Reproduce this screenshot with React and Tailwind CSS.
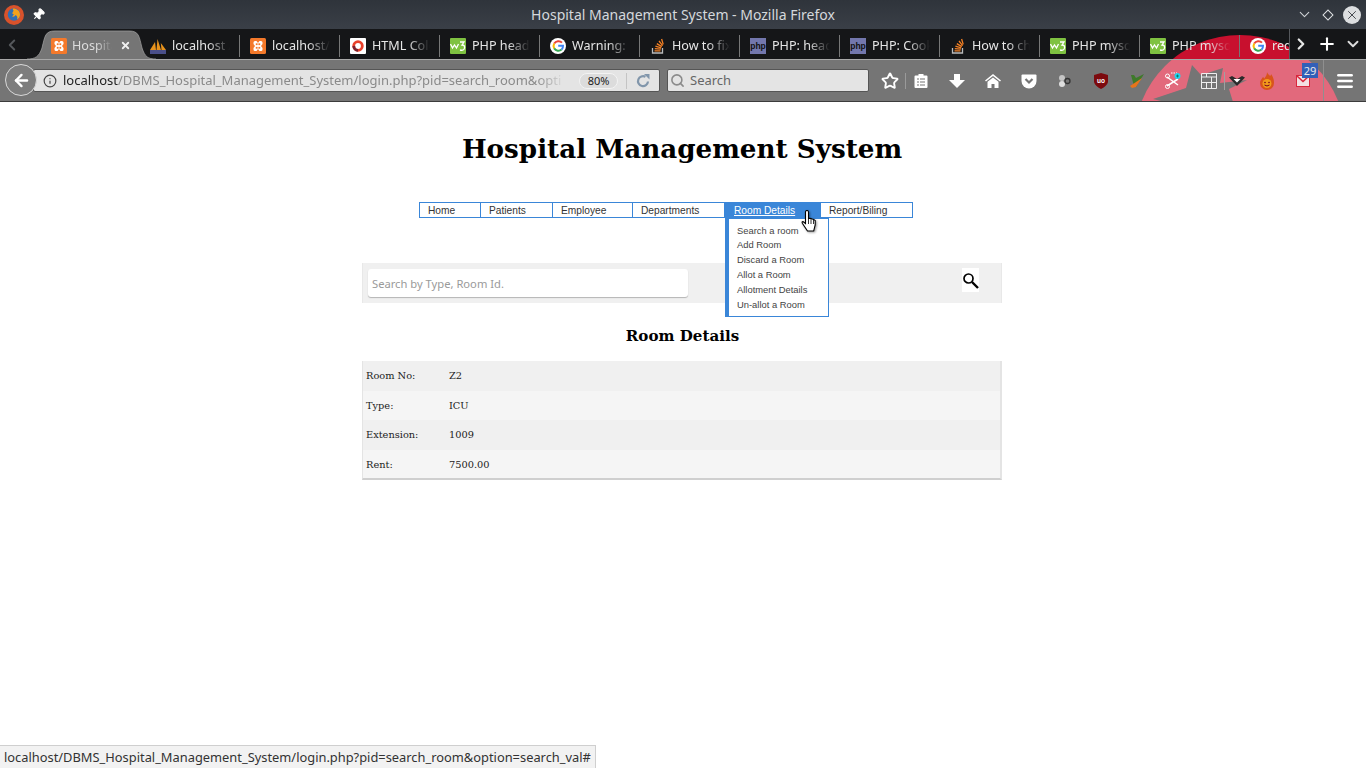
import React from "react";
import { Pin, Info, Search, Star, ChevronDown, ChevronLeft, ChevronRight, ArrowLeft, Plus, X, Menu } from "lucide-react";

const Xampp = () => (
  <svg viewBox="0 0 16 16" className="w-4 h-4 shrink-0">
    <rect width="16" height="16" rx="1.500" fill="#f4792b" />
    <path d="M3.500 4.500Q3.500 3 5 3h1.500L8 5l1.500-2H11q1.500 0 1.500 1.500V6L11 8l1.500 2v1.500Q12.500 13 11 13H9.500L8 11l-1.500 2H5q-1.500 0-1.500-1.500V10L5 8 3.500 6z" fill="#fff" />
    <rect x="5.800" y="5.300" width="1.800" height="1.800" fill="#f4792b" />
    <rect x="8.400" y="5.300" width="1.800" height="1.800" fill="#f4792b" />
    <rect x="5.800" y="8.900" width="1.800" height="1.800" fill="#f4792b" />
    <rect x="8.400" y="8.900" width="1.800" height="1.800" fill="#f4792b" />
  </svg>
);
const Pma = () => (
  <svg viewBox="0 0 16 16" className="w-4 h-4 shrink-0">
    <path d="M0 12 5 4l1 8zM6.500 12l1-11 3.500 11zM11.500 12 10.800 5 16 12z" fill="#e8931c" />
    <rect x="0" y="12" width="16" height="4" fill="#4a4f8a" />
  </svg>
);
const Ring = () => (
  <svg viewBox="0 0 16 16" className="w-4 h-4 shrink-0">
    <rect width="16" height="16" rx="1" fill="#fff" />
    <circle cx="8" cy="8" r="4.300" fill="none" stroke="#e8402a" strokeWidth="2.800" />
    <path d="M8 12.300A4.300 4.300 0 0 1 3.800 8" fill="none" stroke="#7a2230" strokeWidth="2.800" />
  </svg>
);
const W3 = () => (
  <svg viewBox="0 0 16 16" className="w-4 h-4 shrink-0">
    <rect width="16" height="16" rx="1" fill="#7fc241" />
    <path d="M.5 6l2 4 2-3 2 3 2-4M10 4h4l-2 3q3 0 2.500 3T10 12" fill="none" stroke="#fff" strokeWidth="1.300" />
  </svg>
);
const G = () => (
  <svg viewBox="0 0 16 16" className="w-4 h-4 shrink-0">
    <circle cx="8" cy="8" r="8" fill="#fff" />
    <path d="M12 4.600A5 5 0 0 0 4.200 5.600" fill="none" stroke="#ea4335" strokeWidth="2" />
    <path d="M4.200 5.600a5 5 0 0 0 0 4.800" fill="none" stroke="#fbbc05" strokeWidth="2" />
    <path d="M4.200 10.400a5 5 0 0 0 7.400 1.200" fill="none" stroke="#34a853" strokeWidth="2" />
    <path d="M11.600 11.600A5 5 0 0 0 13 7.800H8.200" fill="none" stroke="#4285f4" strokeWidth="2" />
  </svg>
);
const So = () => (
  <svg viewBox="0 0 16 16" className="w-4 h-4 shrink-0">
    <path d="M2.500 10v5h10v-5" fill="none" stroke="#bbb" strokeWidth="1.300" />
    <path d="M4.500 12.800h6M4.800 10.600l6 .6M5.400 8.200l5.800 1.600M6.800 5.600l5 3M9 3l3.600 4.600M11.600 1l1.600 5.400" fill="none" stroke="#f48024" strokeWidth="1.300" />
  </svg>
);
const Php = () => (
  <svg viewBox="0 0 16 16" className="w-4 h-4 shrink-0">
    <rect width="16" height="16" fill="#7377ad" />
    <text x="8" y="11" textAnchor="middle" fontSize="8.500" fontWeight="700" fill="#111" fontFamily="Liberation Sans">php</text>
  </svg>
);
const tabs = [
  [<Pma />, "localhost /"],
  [<Xampp />, "localhost/"],
  [<Ring />, "HTML Color"],
  [<W3 />, "PHP header"],
  [<G />, "Warning: "],
  [<So />, "How to fix"],
  [<Php />, "PHP: head"],
  [<Php />, "PHP: Cook"],
  [<So />, "How to ch"],
  [<W3 />, "PHP mysql"],
  [<W3 />, "PHP mysql"],
  [<G />, "redirect"],
];
const Tab = ({ icon, label, last }) => (
  <div className="flex items-center w-[100px] h-[30px] pt-[3px] shrink-0 relative">
    <div className="flex items-center gap-[6px] pl-[10px] w-[99px] h-full">
      {icon}
      <span className="whitespace-nowrap w-[58px] pt-px overflow-hidden text-[12.6px] text-[#e6e6e6] [mask-image:linear-gradient(to_right,#000_62%,transparent)]">{label}</span>
    </div>
    {!last && <div className="w-px h-[22px] bg-[#777] shrink-0" />}
  </div>
);

const Slot = ({ w, cls = "", children }) => <div className={`${w} ${cls} h-full flex items-center justify-center shrink-0`}>{children}</div>;

const nav = [
  ["Home", "w-[62px]"],
  ["Patients", "w-[73px]"],
  ["Employee", "w-[81px]"],
  ["Departments", "w-[93px]"],
];
const menu = [
  ["Search a room", "h-[14px]"],
  ["Add Room", "h-[15px]"],
  ["Discard a Room", "h-[15px]"],
  ["Allot a Room", "h-[15px]"],
  ["Allotment Details", "h-[15px]"],
  ["Un-allot a Room", "h-[15px]"],
];
const rows = [
  ["Room No:", "Z2", "bg-[#f0f0f0] h-[30px]"],
  ["Type:", "ICU", "bg-[#f5f5f5] h-[29px] pt-[2px]"],
  ["Extension:", "1009", "bg-[#f0f0f0] h-[30px]"],
  ["Rent:", "7500.00", "bg-[#f5f5f5] h-[28px] pt-[2px]"],
];

export default function App() {
  return (
    <div className="w-[1366px] h-[768px] relative overflow-hidden bg-white flex flex-col font-['Noto_Sans',sans-serif]">
      {/* title bar */}
      <div className="h-[29px] shrink-0 bg-gradient-to-b from-[#2f343b] to-[#3a3f47] flex items-center relative">
        <svg viewBox="0 0 20 20" className="w-5 h-5 ml-[4px] relative z-10">
          <circle cx="10" cy="10" r="10" fill="#d9522b" />
          <circle cx="10" cy="9.500" r="6.200" fill="#2f6fb5" />
          <path d="M9 3.500c4 0 7 2.500 7 6 0 2-1 4-3 5 1-2 0-4-1.500-4.500 0 1-1.500 2-3.500 1.500.5-1 1.500-1 2-2-1 0-2-1-1.500-2 .5-.8 1-1 1-2-.5-.5-1-1.500-.5-2z" fill="#f3a21c" />
        </svg>
        <Pin size={13} className="ml-[8px] text-white rotate-45 relative z-10" fill="#fff" />
        <div className="absolute inset-x-0 top-0 h-[29px] flex items-center justify-center text-[14px] text-[#d5d8dc]">Hospital Management System - Mozilla Firefox</div>
        <div className="absolute right-0 top-0 h-[29px] flex items-center">
          <ChevronDown size={17} strokeWidth={1.500} className="text-[#cfd2d6] mr-[11px]" />
          <div className="w-[8px] h-[8px] border border-[#dfe1e3] rotate-45 mr-[11px]" />
          <div className="w-[18px] h-[18px] rounded-full bg-[#dcdee0] flex items-center justify-center mr-[5px]">
            <X size={14} className="text-[#31363c]" strokeWidth={1.500} />
          </div>
        </div>
      </div>
      {/* tab bar */}
      <div className="h-[31px] shrink-0 bg-[#151618] border-b border-[#a8a8a8] flex items-start relative overflow-hidden">
        <div className="absolute left-[1134px] top-[6px] w-[212px] h-[212px] rounded-full bg-[#c8102e]" />
        <svg viewBox="0 0 129 31" className="absolute left-[27px] top-0 w-[129px] h-[31px]">
          <path d="M0 30C8 30 12 28 15 19 18 7 18 2 28 2H102C112 2 112 7 115 19 118 28 121 30 129 30V31H0Z" fill="#757575" stroke="#9a9a9a" strokeWidth=".8" />
        </svg>
        <ChevronLeft size={18} className="text-[#55585c] mt-[7px] ml-[3px] relative" strokeWidth={2.500} />
        <div className="ml-[30px] w-[89px] h-[30px] pt-[3px] flex items-center gap-[5px] shrink-0 relative">
          <Xampp />
          <span className="text-[12.6px] pt-px text-[#dcdcdc] w-[40px] overflow-hidden whitespace-nowrap [mask-image:linear-gradient(to_right,#000_60%,transparent)]">Hospital</span>
          <X size={11} strokeWidth={4} className="text-[#eee] ml-[3px]" />
        </div>
        <div className="flex h-full w-[1150px] overflow-hidden relative">
          {tabs.map(([i, l], k) => <Tab key={k} icon={i} label={l} last={k === tabs.length - 1} />)}
        </div>
        <div className="absolute right-0 top-0 h-[30px] w-[77px] bg-[#151618] flex items-center border-l border-[#55585c]">
          <ChevronRight size={18} strokeWidth={3} className="text-[#e6e6e6] ml-[2px]" />
          <Plus size={20} strokeWidth={2.500} className="text-white ml-[7px]" />
          <ChevronDown size={18} strokeWidth={2.500} className="text-[#ddd] ml-[7px]" />
        </div>
      </div>
      {/* nav bar */}
      <div className="h-[42px] shrink-0 bg-[#757575] border-b border-[#3c3c3c] flex items-center relative overflow-hidden">
        <div className="absolute left-[1134px] top-[-25px] w-[212px] h-[212px] rounded-full bg-[#e2697c]" />
        <svg viewBox="1140 60 120 42" className="absolute left-[1140px] top-0 w-[120px] h-[42px]">
          <polygon points="1192,65 1201,75 1223,68 1220,83 1247,80 1229,89 1233,102 1165,102 1153,99 1186,88" fill="#757575" />
        </svg>
        <div className="ml-[33px] w-[627px] h-[23px] bg-[#e4e4e4] rounded-[2px] border border-[#555] flex items-center relative shrink-0">
          <Info size={14} className="ml-[9px] text-[#444]" />
          <div className="ml-[6px] text-[13px] whitespace-nowrap w-[503px] overflow-hidden text-[#8a8a8a] [mask-image:linear-gradient(to_right,#000_94%,transparent)]">
            <span className="text-[#222]">localhost</span>/DBMS_Hospital_Management_System/login.php?pid=search_room&amp;opti
          </div>
          <div className="absolute left-[545px] top-[3px] w-[39px] h-[16px] rounded-full border border-[#f3f3f3] bg-[#dcdcdc] text-[11px] text-[#222] flex items-center justify-center">80%</div>
          <div className="absolute left-[592px] top-[3px] w-px h-[16px] bg-[#c4c4c4]" />
          <svg viewBox="0 0 14 14" className="absolute left-[602px] top-[4px] w-[14px] h-[14px]">
            <path d="M12 7.500A5 5 0 1 1 9.500 2.800" fill="none" stroke="#8196ab" strokeWidth="2.200" />
            <path d="M8 0h5.500v5.500z" fill="#8196ab" />
          </svg>
        </div>
        <div className="absolute left-[5px] top-[4px] w-[32px] h-[32px] rounded-full bg-[#7d7d7d] border border-[#d8d8d8] flex items-center justify-center">
          <ArrowLeft size={19} strokeWidth={3} className="text-white" />
        </div>
        <div className="ml-[7px] w-[202px] h-[23px] bg-[#e4e4e4] rounded-[2px] border border-[#555] flex items-center shrink-0">
          <Search size={15} strokeWidth={2.500} className="ml-[2px] text-[#8b8b8b]" />
          <span className="ml-[5px] text-[13px] text-[#666]">Search</span>
        </div>
        <div className="relative flex items-center ml-[3px] h-full">
          <Slot w="w-[33px]" cls="pl-[3px]"><Star size={18} strokeWidth={2.500} className="text-white" /></Slot>
          <div className="w-px h-[16px] bg-[#9a9a9a]" />
          <Slot w="w-[33px]" cls="pr-[3px]">
            <svg viewBox="0 0 14 16" className="w-[14px] h-4"><path d="M1.500 2.500H4.500V1h5v1.500h3q1 0 1 1V14q0 1-1 1h-11q-1 0-1-1V3.500q0-1 1-1z" fill="#fff" /><path d="M3 6h2M6 6h5M3 9h2M6 9h5M3 12h2M6 12h5" stroke="#757575" strokeWidth="1.200" /></svg>
          </Slot>
          <Slot w="w-[36px]"><svg viewBox="0 0 16 16" className="w-4 h-4"><path d="M5 1h6v6h5l-8 8-8-8h5z" fill="#fff" /></svg></Slot>
          <Slot w="w-[36px]"><svg viewBox="0 0 16 16" className="w-4 h-4"><path d="M0 7.500 8 1l8 6.500-1 1L8 3 1 8.500z" fill="#fff" /><path d="M2.500 8.800 8 4.500l5.500 4.300V15H9.500v-4h-3v4h-4z" fill="#fff" /></svg></Slot>
          <Slot w="w-[36px]"><svg viewBox="0 0 16 16" className="w-4 h-4"><path d="M1.500 1.500h13q1 0 1 1V8a7.500 7.500 0 0 1-15 0V2.500q0-1 1-1z" fill="#fff" /><path d="M4.500 6 8 9.500 11.500 6" stroke="#757575" strokeWidth="2.200" fill="none" /></svg></Slot>
          <Slot w="w-[36px]"><svg viewBox="0 0 16 16" className="w-4 h-4"><circle cx="5" cy="5" r="3" fill="#c4c4c4" /><circle cx="5" cy="11" r="3" fill="#dedede" /><circle cx="10.500" cy="8" r="2.500" fill="none" stroke="#333" strokeWidth="1.300" /></svg></Slot>
          <Slot w="w-[36px]"><svg viewBox="0 0 16 16" className="w-4 h-4"><path d="M8 0l7 2v7q-1 4-7 7-6-3-7-7V2z" fill="#7c0a0e" /><text x="8" y="10" textAnchor="middle" fontSize="6.500" fill="#fff" fontWeight="700" fontFamily="Liberation Sans">uo</text></svg></Slot>
          <Slot w="w-[36px]"><svg viewBox="0 0 16 16" className="w-4 h-4"><path d="M2 2h3l2 3 8-4-5 8-3 5-2-1z" fill="#3e7a2a" /><path d="M1 13 13 5 7 14 3 15z" fill="#e8741c" /></svg></Slot>
          <Slot w="w-[36px]"><svg viewBox="0 0 18 18" className="w-[18px] h-[18px]"><path d="M3 14 14 7M3 5l11 8" stroke="#fff" strokeWidth="1.500" /><circle cx="3.500" cy="4" r="2" fill="none" stroke="#fff" /><circle cx="3.500" cy="14.500" r="2" fill="none" stroke="#fff" /><path d="M7 1h6" stroke="#fff" strokeDasharray="1.500 1" /><circle cx="13.500" cy="4" r="3" fill="#22d3ee" /><path d="M13.500 2.500v3M12 4h3" stroke="#064" strokeWidth=".7" /></svg></Slot>
          <Slot w="w-[33px]" cls="pl-[3px]"><svg viewBox="0 0 16 16" className="w-4 h-4"><path d="M.5.5h15v15H.5zM.5 4h15M.5 9.500h15M5.500 9.500v6M10.500 4v11M5.500 1v3" fill="none" stroke="#eee" /></svg></Slot>
          <div className="w-px h-[18px] bg-[#a0a0a0]" />
          <Slot w="w-[24px]"><svg viewBox="0 0 16 10" className="w-4 h-[10px]"><path d="M0 1.500 3 0l5 3 5-3 3 1.500L8 10z" fill="#2b2b2b" /><path d="M4.500 3h7L8 6.500z" fill="#fff" /></svg></Slot>
          <Slot w="w-[36px]"><svg viewBox="0 0 16 18" className="w-4 h-[18px]"><path d="M8 0c1 3 2 2 3 4 1-1 1-1 1-2 2 3 3 5 3 9a7 7 0 0 1-14 0c0-3 2-4 3-6 1 1 1 1 1 2 1-2 3-3 3-7z" fill="#d9541c" /><circle cx="8" cy="11.500" r="4.500" fill="#f09a1c" /><path d="M5.500 13q2.500 2 5 0" stroke="#702" fill="none" /><circle cx="6" cy="10.500" r=".8" fill="#702" /><circle cx="10" cy="10.500" r=".8" fill="#702" /></svg></Slot>
          <Slot w="w-[36px]">
            <div className="relative w-[14px] h-[14px] mt-[2px]">
              <svg viewBox="0 0 14 12" className="w-[14px] h-[12px]"><rect x=".5" y=".5" width="13" height="11" fill="#f3dfe2" stroke="#d9263c" /><path d="M1 1l6 5.500L13 1" stroke="#d9263c" strokeWidth="1.600" fill="none" /></svg>
              <div className="absolute left-[6px] top-[-12px] w-[16px] h-[15px] bg-[#3260b8] text-[11px] leading-[15px] text-center text-[#e8e8e8]">29</div>
            </div>
          </Slot>
          <div className="w-[2px]" />
          <div className="w-px self-stretch bg-[#8f8f8f]" />
          <Slot w="w-[42px]"><Menu size={20} strokeWidth={3} className="text-white" /></Slot>
        </div>
      </div>
      {/* page */}
      <div className="flex-1 relative font-['DejaVu_Serif',serif]">
        <h1 className="text-[26.2px] leading-[34px] font-bold text-center mt-[30px] pr-[2px] text-black">Hospital Management System</h1>
        <div className="relative flex w-[494px] ml-[419px] mt-[36px] h-[16px] font-['Liberation_Sans',sans-serif] text-[10.2px] text-[#333]">
          {nav.map(([n, w]) => (
            <div key={n} className={`${w} border border-[#3a86d8] pl-[8px] leading-[16px] -mr-px`}>{n}</div>
          ))}
          <div className="w-[97px] bg-[#3a86d8] pl-[10px] leading-[18px] text-white underline">Room Details</div>
          <div className="w-[93px] -ml-px border border-[#3a86d8] pl-[8px] leading-[16px]">Report/Biling</div>
          <div className="absolute left-[306px] top-[16px] w-[104px] h-[99px] z-10 bg-white border border-[#3a86d8] border-l-4 pt-[5px] pl-[8px]">
            {menu.map(([m, h]) => (
              <div key={m} className={`${h} leading-[14px] text-[#444] text-[9.4px] whitespace-nowrap`}>{m}</div>
            ))}
          </div>
          <svg viewBox="0 0 17 22" className="absolute left-[382px] top-[8px] w-[17px] h-[22px] z-20 drop-shadow-[1px_1px_1px_rgba(0,0,0,0.4)]">
            <path d="M4.500 2a1.500 1.500 0 0 1 3 0v6.500l1-.3 1.500.3 1.200.5 1.500.5 1.500 1V15l-1.500 6H6.500L1.500 13.500Q.5 11.500 2 11.500l2.500 2z" fill="#fff" stroke="#000" strokeWidth="1.100" />
            <path d="M7.500 9v5M10 9v5M12.500 10v4" stroke="#000" strokeWidth=".8" />
          </svg>
        </div>
        <div className="mt-[45px] ml-[362px] w-[640px] h-[40px] bg-[#f0f0f0] border-x border-[#e8e8e8] flex items-start relative">
          <div className="ml-[5px] mt-[6px] w-[320px] h-[28px] pt-[2px] bg-white rounded-[3px] shadow-[0_1px_1px_rgba(0,0,0,0.25)] flex items-center pl-[4px] text-[11.2px] text-[#9a9a9a] font-['Noto_Sans',sans-serif]">Search by Type, Room Id.</div>
          <div className="absolute left-[599px] top-[5px] w-[17px] h-[24px] bg-white flex items-center justify-center">
            <svg viewBox="0 0 17 17" className="w-[17px] h-[17px]"><circle cx="6.500" cy="6.500" r="4.500" fill="none" stroke="#000" strokeWidth="1.700" /><path d="M10 10l6 6" stroke="#000" strokeWidth="2.400" /></svg>
          </div>
        </div>
        <h2 className="mt-[23px] text-[15.1px] leading-[20px] font-bold text-center pr-px text-black">Room Details</h2>
        <div className="mt-[15px] ml-[362px] w-[640px] border-l border-r-2 border-b-2 border-[#e4e4e4] border-b-[#cfcfcf] text-[9.8px] text-[#222]">
          {rows.map(([a, b, c]) => (
            <div key={a} className={`flex items-center ${c}`}>
              <div className="w-[86px] pl-[3px]">{a}</div>
              <div>{b}</div>
            </div>
          ))}
        </div>
      </div>
      {/* status */}
      <div className="absolute left-0 bottom-0 h-[23px] w-[596px] bg-[#f2f2f2] border-t border-r border-[#cfcfcf] flex items-center pl-[4px] pt-[2px] text-[12.87px] text-[#333] whitespace-nowrap">
        localhost/DBMS_Hospital_Management_System/login.php?pid=search_room&amp;option=search_val#
      </div>
    </div>
  );
}
